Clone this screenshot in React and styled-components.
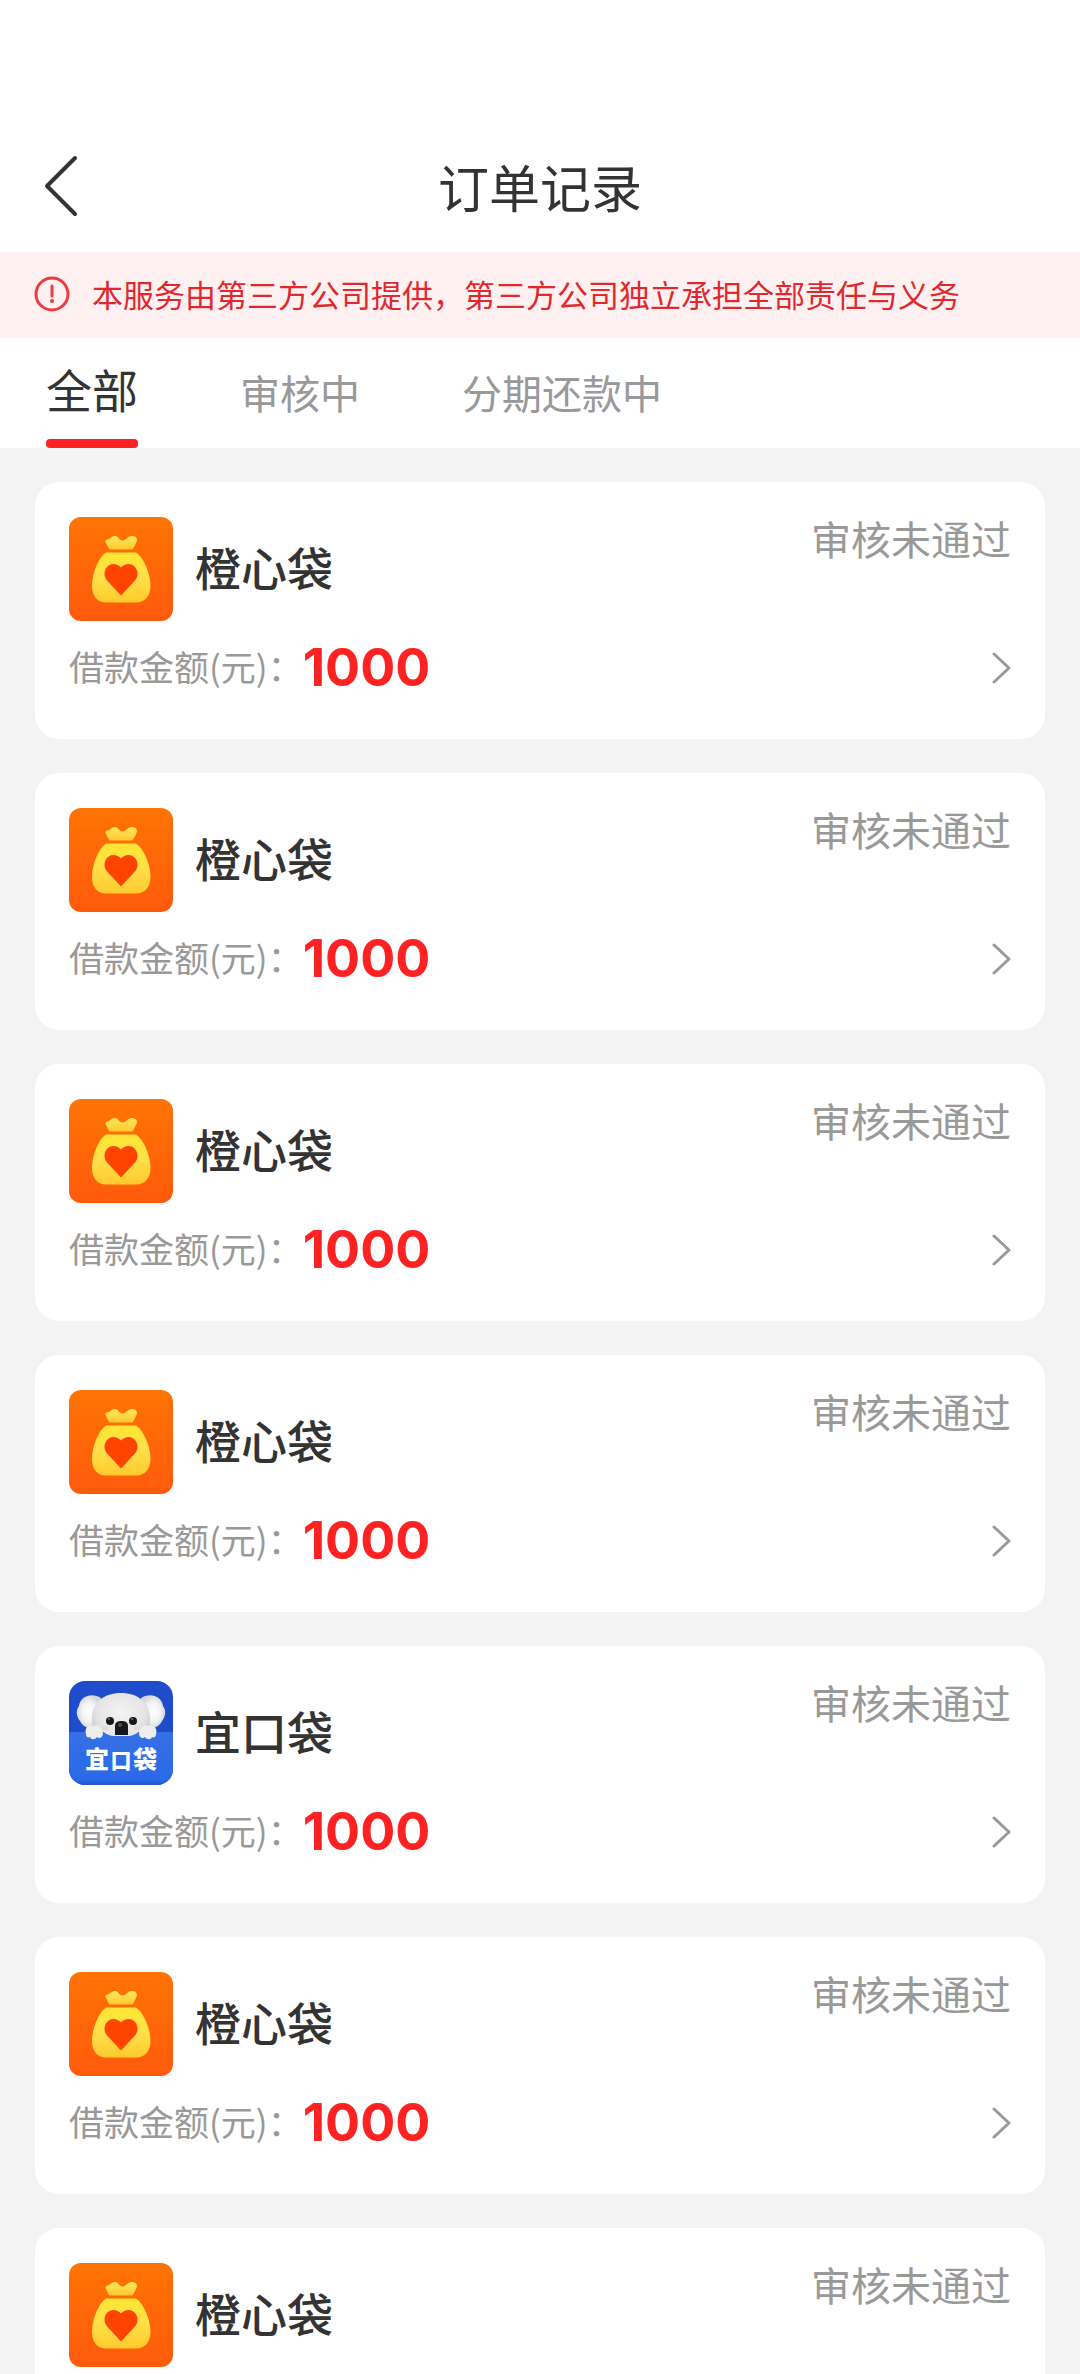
import React, { useState } from 'react'
import styled, { createGlobalStyle } from 'styled-components'

const tabs = ['全部', '审核中', '分期还款中']

const orders = [
    { id: 1, name: '橙心袋', logo: 'bag', status: '审核未通过', amount: 1000 },
    { id: 2, name: '橙心袋', logo: 'bag', status: '审核未通过', amount: 1000 },
    { id: 3, name: '橙心袋', logo: 'bag', status: '审核未通过', amount: 1000 },
    { id: 4, name: '橙心袋', logo: 'bag', status: '审核未通过', amount: 1000 },
    { id: 5, name: '宜口袋', logo: 'koala', status: '审核未通过', amount: 1000 },
    { id: 6, name: '橙心袋', logo: 'bag', status: '审核未通过', amount: 1000 },
    { id: 7, name: '橙心袋', logo: 'bag', status: '审核未通过', amount: 1000 }
]

const BagLogo = () => (
    <LogoSvg viewBox='0 0 104 104' aria-hidden='true'>
        <defs>
            <linearGradient id='bagBack' x1='0' y1='0' x2='0' y2='1'>
                <stop offset='0' stopColor='#ff7404' />
                <stop offset='1' stopColor='#ff5a0c' />
            </linearGradient>
            <linearGradient id='bagFill' x1='0' y1='0' x2='0' y2='1'>
                <stop offset='0' stopColor='#ffe632' />
                <stop offset='0.5' stopColor='#ffe04a' />
                <stop offset='1' stopColor='#ffca2c' />
            </linearGradient>
            <linearGradient id='bagTop' x1='0' y1='0' x2='0' y2='1'>
                <stop offset='0' stopColor='#ffe95c' />
                <stop offset='1' stopColor='#ffc82e' />
            </linearGradient>
        </defs>
        <rect width='104' height='104' rx='12' fill='url(#bagBack)' />
        <path d='M40 32 L36.500 25 Q36 23 38.500 22.500 C41.500 22 42 19 46 19 C50 19 49.500 23.500 53.500 23.500 C57.500 23.500 58 19 63 19 C67 19 69 22 67.500 25 L64.500 31 Q64 32.500 62 32.500 H42 Q40.500 32.500 40 32 Z' fill='url(#bagTop)' />
        <path d='M37 35.500 H67 C75 41 81.500 57 81.500 69 C81.500 79 76 85.500 67 85.500 H37 C28 85.500 23 79 23 69 C23 57 29 41 37 35.500 Z' fill='url(#bagFill)' />
        <path d='M52 50.500 C48.500 46.500 42.500 45.500 38.500 49.500 C34.500 53.500 34.500 60 38.500 64 L52 78.500 L65.500 64 C69.500 60 69.500 53.500 65.500 49.500 C61.500 45.500 55.500 46.500 52 50.500 Z' fill='#ff4400' />
    </LogoSvg>
)

const KoalaLogo = () => (
    <LogoSvg viewBox='0 0 104 104' aria-hidden='true'>
        <defs>
            <clipPath id='koalaClip'>
                <rect width='104' height='104' rx='16' />
            </clipPath>
            <radialGradient id='koalaHead' cx='0.5' cy='0.4' r='0.6'>
                <stop offset='0' stopColor='#f4f4f4' />
                <stop offset='0.7' stopColor='#e4e4e5' />
                <stop offset='1' stopColor='#c9cacf' />
            </radialGradient>
            <radialGradient id='koalaEar' cx='0.5' cy='0.5' r='0.5'>
                <stop offset='0' stopColor='#ffffff' />
                <stop offset='0.6' stopColor='#f2f2f3' />
                <stop offset='1' stopColor='#d3d5da' />
            </radialGradient>
            <linearGradient id='koalaPanel' x1='0' y1='0' x2='0' y2='1'>
                <stop offset='0' stopColor='#3670e4' />
                <stop offset='0.9' stopColor='#2a69e8' />
                <stop offset='1' stopColor='#2056c8' />
            </linearGradient>
        </defs>
        <g clipPath='url(#koalaClip)'>
            <rect width='104' height='104' fill='#1e4cca' />
            <path d='M32 17 C23 11 11 15 10 25 C6 30 8 36 11 40 C14 46 20 49 30 47 Z' fill='url(#koalaEar)' />
            <path d='M72 17 C81 11 93 15 94 25 C98 30 96 36 93 40 C90 46 84 49 74 47 Z' fill='url(#koalaEar)' />
            <path d='M52 12 C69 12 80 21 81 36 C82 46 77 56 69 60 H35 C27 56 22 46 23 36 C24 21 35 12 52 12 Z' fill='url(#koalaHead)' />
            <rect y='51' width='104' height='53' fill='url(#koalaPanel)' />
            <path d='M33 49 C36 53 41 55 46 55 H58 C63 55 68 53 71 49 V42 H33 Z' fill='#e7e7e8' />
            <circle cx='41' cy='40' r='4' fill='#171717' />
            <circle cx='64' cy='40' r='4' fill='#171717' />
            <circle cx='40' cy='38' r='1' fill='#777777' />
            <circle cx='63' cy='38' r='1' fill='#777777' />
            <ellipse cx='36' cy='47' rx='4' ry='2' fill='#ecd6d2' />
            <ellipse cx='69' cy='47' rx='4' ry='2' fill='#ecd6d2' />
            <path d='M46 54 V45 C46 41 49 40 52.500 40 C56 40 59 41 59 45 V54 Z' fill='#17181b' />
            <ellipse cx='51' cy='44' rx='2' ry='2' fill='#4e4f53' />
            <path d='M17 53 C15 47 20 43 24 45 C28 43 33 45 34 52 C34 57 30 58 28 56 C26 59 22 59 21 56 C19 57 17 56 17 53 Z' fill='#ededee' />
            <path d='M87 53 C89 47 84 43 80 45 C76 43 71 45 70 52 C70 57 74 58 76 56 C78 59 82 59 83 56 C85 57 87 56 87 53 Z' fill='#ededee' />
            <LogoText y='87'>
                <tspan x='28'>宜</tspan>
                <tspan x='52' fontSize='21'>口</tspan>
                <tspan x='76'>袋</tspan>
            </LogoText>
        </g>
    </LogoSvg>
)

const OrderCard = ({ order }) => (
    <li>
        <CardLink href={`#order-${order.id}`}>
            <CardHead>
                {order.logo === 'koala' ? <KoalaLogo /> : <BagLogo />}
                <Name>{order.name}</Name>
                <Status>{order.status}</Status>
            </CardHead>
            <CardFoot>
                <Label>借款金额(元)：</Label>
                <Amount>{order.amount}</Amount>
                <Chevron viewBox='0 0 20 34' aria-hidden='true'>
                    <path d='M3 3 L18 17 L3 31' />
                </Chevron>
            </CardFoot>
        </CardLink>
    </li>
)

const App = () => {
    const [active, setActive] = useState(tabs[0])

    return (
        <Screen>
            <GlobalStyle />
            <Header>
                <BackButton type='button' aria-label='返回'>
                    <svg width='36' height='64' viewBox='0 0 36 64'>
                        <path d='M32 4 L4 32 L32 60' />
                    </svg>
                </BackButton>
                <Title>订单记录</Title>
            </Header>
            <Notice>
                <svg width='36' height='36' viewBox='0 0 36 36' aria-hidden='true'>
                    <circle cx='18' cy='18' r='16' fill='none' stroke='#ee3b40' strokeWidth='3' />
                    <path d='M18 10 V20' stroke='#ee3b40' strokeWidth='3' strokeLinecap='round' />
                    <circle cx='18' cy='25' r='2' fill='#ee3b40' />
                </svg>
                <span>本服务由第三方公司提供，第三方公司独立承担全部责任与义务</span>
            </Notice>
            <Tabs>
                {tabs.map(tab => (
                    <Tab key={tab} type='button' $active={tab === active} onClick={() => setActive(tab)}>
                        {tab}
                    </Tab>
                ))}
            </Tabs>
            <List>
                {orders.map(order => <OrderCard key={order.id} order={order} />)}
            </List>
        </Screen>
    )
}

const GlobalStyle = createGlobalStyle`
    * {
        box-sizing: border-box;
    }
    body {
        margin: 0;
        background: #f3f3f3;
        font-family: 'Noto Sans CJK SC', sans-serif;
        color: #333;
    }
    button {
        padding: 0;
        border: 0;
        background: none;
        font-family: inherit;
        cursor: pointer;
    }
`

const Screen = styled.div`
    display: flex;
    flex-direction: column;
    height: 100vh;
`

const Header = styled.header`
    display: grid;
    grid-template-columns: 80px 1fr 80px;
    align-items: center;
    flex-shrink: 0;
    height: 252px;
    padding: 120px 43px 0;
    background: #fff;
`

const BackButton = styled.button`
    display: flex;
    svg {
        fill: none;
        stroke: #333;
        stroke-width: 4;
        stroke-linecap: round;
        stroke-linejoin: round;
    }
`

const Title = styled.h1`
    margin: 0;
    font-size: 51px;
    font-weight: 400;
    line-height: 64px;
    text-align: center;
`

const Notice = styled.div`
    display: flex;
    align-items: center;
    flex-shrink: 0;
    gap: 22px;
    height: 86px;
    padding: 0 34px 2px;
    background: #fff1f1;
    color: #e0282e;
    font-size: 31px;
    line-height: 40px;
`

const Tabs = styled.nav`
    display: flex;
    flex-shrink: 0;
    gap: 102px;
    height: 110px;
    padding: 0 46px;
    background: #fff;
`

const Tab = styled.button`
    display: flex;
    flex-direction: column;
    justify-content: space-between;
    padding-top: ${props => props.$active ? '20px' : '24px'};
    font-size: ${props => props.$active ? '46px' : '40px'};
    line-height: 60px;
    color: ${props => props.$active ? '#333' : '#999'};
    &::after {
        content: '';
        width: 100%;
        height: 9px;
        border-radius: 4px;
        background: ${props => props.$active ? '#ff2222' : 'transparent'};
    }
`

const List = styled.ul`
    display: flex;
    flex-direction: column;
    flex: 1;
    gap: 34px;
    min-height: 0;
    margin: 0;
    padding: 34px 35px;
    overflow-y: auto;
    list-style: none;
    scrollbar-width: none;
`

const CardLink = styled.a`
    display: block;
    padding: 35px 34px 41px;
    border-radius: 24px;
    background: #fff;
    color: inherit;
    text-decoration: none;
`

const CardHead = styled.div`
    display: flex;
    align-items: center;
    gap: 22px;
`

const LogoSvg = styled.svg`
    flex-shrink: 0;
    width: 104px;
    height: 104px;
`

const LogoText = styled.text`
    font-family: 'Noto Sans CJK SC', sans-serif;
    font-size: 24px;
    font-weight: 900;
    text-anchor: middle;
    fill: #fff;
`

const Name = styled.span`
    padding-bottom: 6px;
    font-size: 46px;
    font-weight: 500;
    line-height: 60px;
`

const Status = styled.span`
    align-self: flex-start;
    margin-left: auto;
    font-size: 40px;
    line-height: 42px;
    color: #999;
`

const CardFoot = styled.div`
    display: flex;
    align-items: center;
    height: 60px;
    margin-top: 17px;
`

const Label = styled.span`
    padding-bottom: 4px;
    font-size: 35px;
    line-height: 56px;
    color: #999;
`

const Amount = styled.strong`
    font-family: Inter, sans-serif;
    font-size: 52px;
    font-weight: 700;
    line-height: 60px;
    color: #ff2222;
`

const Chevron = styled.svg`
    width: 20px;
    height: 34px;
    margin-left: auto;
    fill: none;
    stroke: #999;
    stroke-width: 3;
    stroke-linecap: round;
    stroke-linejoin: round;
`

export default App
